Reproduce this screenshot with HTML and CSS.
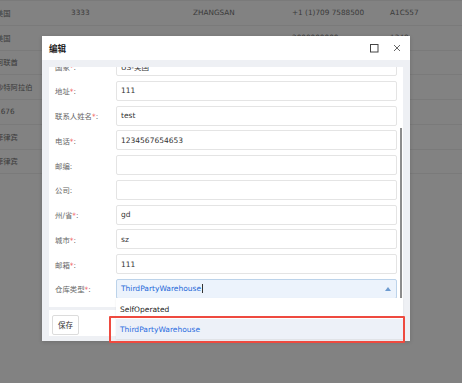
FILE: index.html
```html
<!DOCTYPE html>
<html lang="zh-CN">
  <head>
    <meta charset="UTF-8" />
    <title>编辑</title>
    <link rel="stylesheet" href="styles.css">
  </head>
  <body>
    <!-- list behind the mask -->
    <div class="grid">
      <div class="grid-row"><span>美国</span><span>3333</span><span>ZHANGSAN</span><span>+1 (1)709 7588500</span><span>A1C557</span></div>
      <div class="grid-row"><span>美国</span><span></span><span></span><span>2000000000</span><span>1348</span></div>
      <div class="grid-row"><span>阿联酋</span><span></span><span></span><span></span><span></span></div>
      <div class="grid-row"><span>沙特阿拉伯</span><span></span><span></span><span></span><span></span></div>
      <div class="grid-row"><span>1676</span><span></span><span></span><span></span><span></span></div>
      <div class="grid-row"><span>菲律宾</span><span></span><span></span><span></span><span></span></div>
      <div class="grid-row"><span>菲律宾</span><span></span><span></span><span></span><span></span></div>
    </div>

    <div class="dialog">
      <div class="dialog-head">
        <span class="dialog-title">编辑</span>
        <span class="head-tools">
          <svg width="9" height="9" viewBox="0 0 9 9"><rect x="0.5" y="0.5" width="7.5" height="7.5" fill="none" stroke="#444" stroke-width="1"/></svg>
          <svg width="8" height="8" viewBox="0 0 8 8"><path d="M1 1 L7 7 M7 1 L1 7" stroke="#666" stroke-width="1" fill="none"/></svg>
        </span>
      </div>

      <div class="dialog-body">
        <div class="panel">
          <form class="form">
            <div class="row"><label>国家<i>*</i>:</label><div class="field">US-美国</div></div>
            <div class="row"><label>地址<i>*</i>:</label><div class="field">111</div></div>
            <div class="row"><label>联系人姓名<i>*</i>:</label><div class="field">test</div></div>
            <div class="row"><label>电话<i>*</i>:</label><div class="field">1234567654653</div></div>
            <div class="row"><label>邮编:</label><div class="field"></div></div>
            <div class="row"><label>公司:</label><div class="field"></div></div>
            <div class="row"><label>州/省<i>*</i>:</label><div class="field">gd</div></div>
            <div class="row"><label>城市<i>*</i>:</label><div class="field">sz</div></div>
            <div class="row"><label>邮箱<i>*</i>:</label><div class="field">111</div></div>
            <div class="row"><label>仓库类型<i>*</i>:</label><div class="field select"><span class="caret">ThirdPartyWarehouse</span><span class="arrow"></span></div></div>
          </form>
          <div class="scroll-thumb"></div>
        </div>
        <div class="dialog-foot">
          <button class="save-btn" type="button">保存</button>
        </div>
      </div>

      <!-- open select menu -->
      <ul class="menu">
        <li>SelfOperated</li>
        <li class="active">ThirdPartyWarehouse</li>
      </ul>
    </div>

    <div class="mark"></div>
  </body>
</html>
```

FILE: styles.css
```css
* {
  margin: 0;
  padding: 0;
  box-sizing: border-box;
}

html,
body {
  width: 462px;
  height: 383px;
  overflow: hidden;
}

body {
  background: #828282;
  font-family: "DejaVu Sans", "Noto Sans CJK SC", sans-serif;
  position: relative;
}

/* list behind the mask */
.grid {
  margin-left: -4px;
  border-top: 1px solid #7a7a7a;
}

.grid-row {
  display: grid;
  grid-template-columns: 75px 122px 99px 98px auto;
  height: 24.75px;
  align-items: center;
  border-bottom: 1px solid #7a7a7a;
  font-size: 7.3px;
  color: #3a3a3a;
  white-space: nowrap;
}

/* dialog */
.dialog {
  position: absolute;
  left: 42px;
  top: 36px;
  width: 368px;
  height: 305px;
  background: #eef0f4;
  display: flex;
  flex-direction: column;
  box-shadow: 0 1px 4px rgba(0, 0, 0, 0.15);
}

.dialog-head {
  height: 24px;
  background: #fff;
  display: flex;
  align-items: center;
  justify-content: space-between;
  padding: 0 9px 0 7px;
}

.dialog-title {
  font-size: 8.6px;
  font-weight: bold;
  color: #222;
}

.head-tools {
  display: flex;
  align-items: center;
  gap: 14px;
}

.head-tools svg {
  display: block;
}

.dialog-body {
  padding: 7px 7px 0;
}

.panel {
  height: 240px;
  background: #fff;
  overflow: hidden;
  position: relative;
}

.form {
  padding: 0 6px;
  margin-top: -11px;
}

.row {
  display: flex;
  align-items: center;
  height: 20px;
  margin-bottom: 4.75px;
}

.row label {
  width: 61px;
  flex: none;
  font-size: 7.4px;
  color: #666;
  white-space: nowrap;
}

.row label i {
  font-style: normal;
  color: #f04848;
}

.field {
  flex: 1;
  height: 20px;
  border: 1px solid #e4e4e4;
  border-radius: 2px;
  padding-left: 4px;
  font-size: 7.5px;
  color: #333;
  display: flex;
  align-items: center;
}

.field.select {
  background: #ecf3fc;
  border-color: #bcd3ea;
  color: #2468d8;
  justify-content: space-between;
  padding-right: 5px;
}

.caret {
  border-right: 1px solid #333;
  padding-right: 1px;
}

.arrow {
  width: 0;
  height: 0;
  border-left: 3px solid transparent;
  border-right: 3px solid transparent;
  border-bottom: 4px solid #6d9bd0;
}

.scroll-thumb {
  position: absolute;
  right: 1px;
  top: 61px;
  width: 2px;
  height: 174px;
  background: #8c8c8c;
}

.dialog-foot {
  margin-top: 3px;
  height: 26px;
  background: #fff;
  padding: 3px;
}

.save-btn {
  width: 27px;
  height: 20px;
  background: #fff;
  border: 1px solid #dcdcdc;
  border-radius: 2px;
  font-family: inherit;
  font-size: 7.5px;
  color: #333;
}

/* open select menu */
.menu {
  position: absolute;
  left: 74px;
  top: 262px;
  width: 287px;
  list-style: none;
  background: #fff;
  box-shadow: 0 1px 2px rgba(0, 0, 0, 0.08);
}

.menu li {
  height: 20.5px;
  display: flex;
  align-items: center;
  padding-left: 4px;
  padding-top: 2px;
  font-size: 7.5px;
  color: #222;
}

.menu li.active {
  background: #edf1f8;
  color: #2a6cdf;
}

/* red annotation box */
.mark {
  position: absolute;
  left: 109px;
  top: 316px;
  width: 296px;
  height: 27px;
  border: 2px solid #ee4a3f;
  border-radius: 1px;
}
```
